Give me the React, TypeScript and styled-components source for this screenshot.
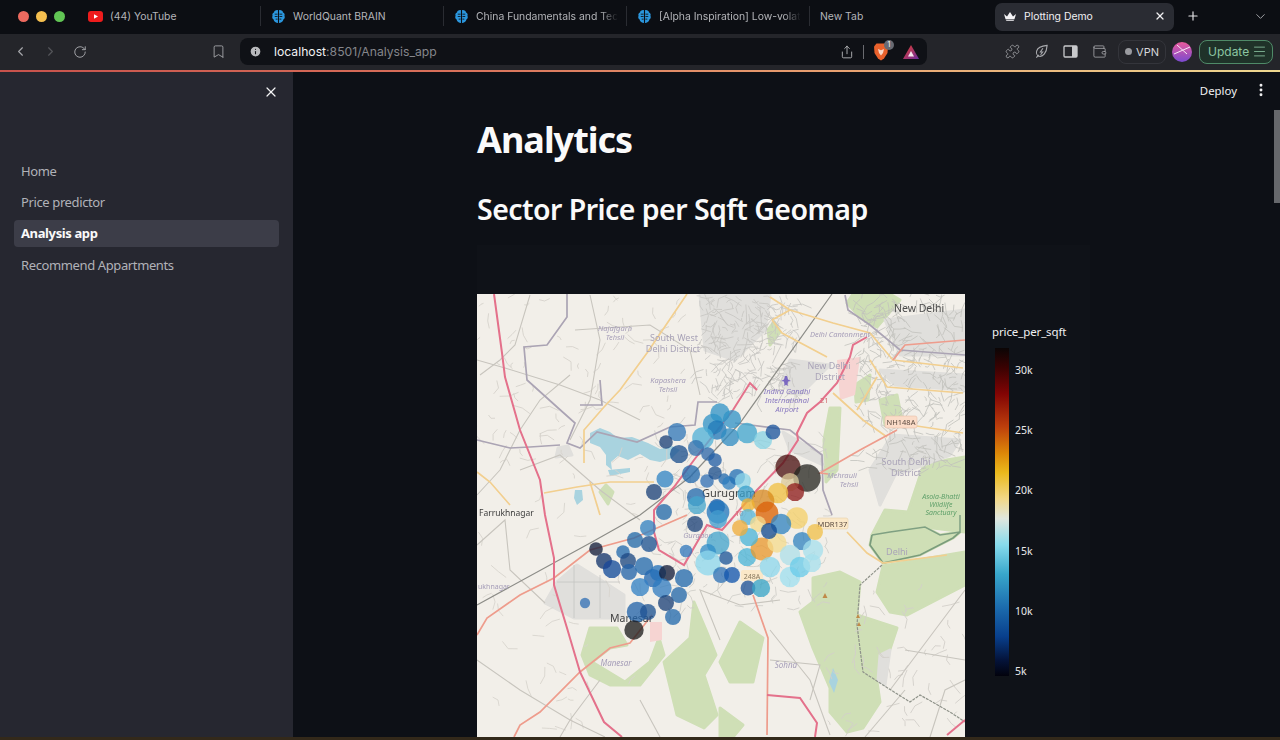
import React from 'react';
import styled, { createGlobalStyle } from 'styled-components';
import {
    ChevronLeft,
    ChevronRight,
    ChevronDown,
    RotateCw,
    Bookmark,
    Share,
    Puzzle,
    Wallet,
    Menu,
    X,
    Plus,
    EllipsisVertical,
    Info
} from 'lucide-react';

const GlobalStyle = createGlobalStyle`
    html, body {
        margin: 0;
        padding: 0;
        background: #0e1117;
        overflow: hidden;
    }
    * {
        box-sizing: border-box;
    }
`;

const UI_FONT = `"Inter", "Liberation Sans", sans-serif`;
const APP_FONT = `"Noto Sans", "Open Sans", sans-serif`;

const Page = styled.div`
    width: 1280px;
    height: 740px;
    display: flex;
    flex-direction: column;
    overflow: hidden;
    font-family: ${APP_FONT};
`;

const TabBar = styled.div`
    height: 34px;
    padding-bottom: 2px;
    display: flex;
    align-items: center;
    background: #0c0e13;
    font-family: ${UI_FONT};
`;

const TrafficLights = styled.div`
    width: 78px;
    padding-left: 18px;
    display: flex;
    gap: 7px;
`;

const Light = styled.span<{ $color: string }>`
    width: 11px;
    height: 11px;
    border-radius: 50%;
    background: ${p => p.$color};
`;

const Tab = styled.div<{ $last?: boolean }>`
    width: 183px;
    height: 20px;
    padding: 0 6px 0 10px;
    display: flex;
    align-items: center;
    gap: 7px;
    flex-shrink: 0;
    border-right: 1px solid ${p => (p.$last ? 'transparent' : '#2a2c32')};
`;

const TabLabel = styled.span<{ $fade?: boolean }>`
    font-size: 10.4px;
    color: #b4b5b9;
    white-space: nowrap;
    mask-image: ${p => (p.$fade ? 'linear-gradient(to right, #000 88%, transparent 100%)' : 'none')};
`;

const ActiveTab = styled.div`
    width: 179px;
    height: 28px;
    margin: 2px 0 0 2px;
    padding: 0 8px 0 9px;
    display: flex;
    align-items: center;
    gap: 8px;
    border-radius: 7px;
    background: #2a2c33;
    color: #f0f0f2;
    font-size: 10.4px;
`;

const ActiveLabel = styled.span`
    flex: 1;
    margin-top: -2px;
`;

const TabActions = styled.div`
    flex: 1;
    padding: 0 12px;
    display: flex;
    align-items: center;
    justify-content: space-between;
    color: #e6e6e8;
`;

const Toolbar = styled.div`
    height: 36px;
    padding: 0 0 1px 13px;
    display: flex;
    align-items: center;
    background: #24252a;
    color: #a8a9ad;
    font-family: ${UI_FONT};
`;

const NavIcons = styled.div`
    width: 198px;
    display: flex;
    align-items: center;
    gap: 15px;
`;

const BookmarkSlot = styled.div`
    width: 29px;
    display: flex;
`;

const UrlBar = styled.div`
    width: 687px;
    height: 27px;
    padding: 0 8px 0 9px;
    display: flex;
    align-items: center;
    border-radius: 8px;
    background: #0f1116;
`;

const Url = styled.span`
    flex: 1;
    margin-left: 12px;
    font-size: 12.2px;
    color: #85868b;
    strong {
        font-weight: 400;
        color: #f2f2f4;
    }
`;

const UrlDivider = styled.span`
    width: 1px;
    height: 14px;
    margin: 0 9px;
    background: #6a6b70;
`;

const BraveSlot = styled.span`
    position: relative;
    width: 16px;
    height: 18px;
    margin-right: 14px;
`;

const BraveBadge = styled.span`
    position: absolute;
    top: -3px;
    right: -5px;
    width: 10px;
    height: 10px;
    border-radius: 50%;
    background: #676a72;
    color: #fff;
    font-size: 7px;
    line-height: 10px;
    text-align: center;
`;

const ExtensionIcons = styled.div`
    margin-left: 78px;
    display: flex;
    align-items: center;
    gap: 14px;
`;

const VpnPill = styled.div`
    width: 48px;
    height: 24px;
    margin-left: -3px;
    display: flex;
    align-items: center;
    justify-content: center;
    gap: 4px;
    border-radius: 8px;
    border: 1px solid #34353b;
    font-size: 11px;
    color: #d6d7da;
`;

const VpnDot = styled.span`
    width: 7px;
    height: 7px;
    border-radius: 50%;
    background: #9a9ba0;
`;

const Avatar = styled.svg`
    margin: 0 7px 0 6px;
    flex-shrink: 0;
`;

const UpdateButton = styled.div`
    width: 74px;
    height: 24px;
    padding: 0 5px 0 8px;
    display: flex;
    align-items: center;
    justify-content: space-between;
    border-radius: 8px;
    border: 1px solid #4f8a68;
    background: #1f3229;
    color: #8cc5a2;
    font-size: 12px;
`;

const AccentLine = styled.div`
    height: 2px;
    background: linear-gradient(to right, #c8524c 0%, #d8705a 35%, #e8a070 65%, #eed890 100%);
`;

const Body = styled.div`
    flex: 1;
    display: flex;
    min-height: 0;
`;

const Sidebar = styled.nav`
    width: 293px;
    padding: 85px 14px 0;
    position: relative;
    background: #262730;
    flex-shrink: 0;
`;

const CloseButton = styled.span`
    position: absolute;
    top: 12px;
    right: 14px;
    color: #f4f4f6;
    display: flex;
`;

const NavItem = styled.div<{ $active?: boolean }>`
    height: 27px;
    margin-bottom: 4.4px;
    padding-left: 7px;
    display: flex;
    align-items: center;
    border-radius: 4px;
    font-size: 13px;
    letter-spacing: -0.38px;
    font-weight: ${p => (p.$active ? 700 : 400)};
    color: ${p => (p.$active ? '#fafafa' : '#b1b2b8')};
    background: ${p => (p.$active ? '#3c3d48' : 'transparent')};
`;

const Main = styled.main`
    flex: 1;
    position: relative;
    padding: 42px 0 0 184px;
    background: #0d1016;
    color: #fafafa;
    overflow: hidden;
`;

const AppHeader = styled.div`
    position: absolute;
    top: 10px;
    right: 11px;
    display: flex;
    align-items: center;
    gap: 16px;
    font-size: 11.4px;
    color: #f0f0f2;
`;

const ScrollThumb = styled.div`
    position: absolute;
    top: 38px;
    right: 0;
    width: 6px;
    height: 93px;
    background: #66686c;
`;

const Title = styled.h1`
    margin: 0;
    font-size: 36px;
    line-height: 52px;
    font-weight: 700;
    letter-spacing: -1px;
`;

const Subtitle = styled.h2`
    margin: 21px 0 14px;
    font-size: 28.5px;
    line-height: 44px;
    font-weight: 600;
    letter-spacing: -0.55px;
`;

const Plot = styled.div`
    width: 613px;
    height: 500px;
    padding-top: 49px;
    display: flex;
    background: #0f1218;
`;

const MapSvg = styled.svg`
    display: block;
    flex-shrink: 0;
`;

const Legend = styled.div`
    margin: 30px 0 0 27px;
`;

const LegendTitle = styled.div`
    font-size: 11.5px;
    line-height: 16px;
    letter-spacing: -0.12px;
    color: #f0f0f2;
`;

const LegendBody = styled.div`
    margin: 8px 0 0 3px;
    display: flex;
    gap: 6px;
`;

const ColorBar = styled.div`
    width: 14px;
    height: 328px;
    background: linear-gradient(
        to bottom,
        #0a0505 0%,
        #3a0202 6%,
        #820404 14%,
        #bd3f0c 24%,
        #dc8708 32%,
        #eab91c 38%,
        #f2d888 46%,
        #dfe6de 52%,
        #87dbec 60%,
        #38a6cb 69%,
        #1c6cae 79%,
        #083f8c 88%,
        #04143c 95%,
        #02020c 100%
    );
`;

const Ticks = styled.div`
    padding-top: 14px;
`;

const Tick = styled.div`
    height: 60.2px;
    font-size: 10.5px;
    line-height: 16px;
    color: #e8e8ea;
`;

const WallpaperStrip = styled.div`
    height: 3px;
    background: #33291a;
`;

type Pt = [number, number];

const pts = (list: Pt[]) => list.map(p => p.join(',')).join(' ');

// little seeded generator for the fine street texture of the towns
function streets(seed: number, x0: number, y0: number, x1: number, y1: number, n: number): string {
    let s = seed;
    const rnd = () => {
        s = (s * 16807) % 2147483647;
        return s / 2147483647;
    };
    let d = '';
    for (let i = 0; i < n; i++) {
        const x = x0 + rnd() * (x1 - x0);
        const y = y0 + rnd() * (y1 - y0);
        const a = rnd() * Math.PI * 2;
        const l = 2 + rnd() * 8;
        const mx = x + Math.cos(a) * l;
        const my = y + Math.sin(a) * l;
        const b = a + (rnd() - 0.5) * 2;
        d += `M${x.toFixed(1)} ${y.toFixed(1)}L${mx.toFixed(1)} ${my.toFixed(1)}L${(mx + Math.cos(b) * l).toFixed(1)} ${(my + Math.sin(b) * l).toFixed(1)}`;
    }
    return d;
}

const greens: Pt[][] = [
    [[847, 303], [860, 317], [877, 327], [900, 300], [890, 294], [853, 294]],
    [[923, 467], [947, 460], [965, 457], [965, 532], [925, 527], [890, 532], [872, 535], [885, 510], [908, 512]],
    [[872, 535], [890, 532], [925, 527], [940, 535], [960, 532], [953, 538], [920, 555], [883, 563], [870, 545]],
    [[883, 566], [965, 552], [965, 585], [907, 615], [890, 612], [877, 592]],
    [[813, 578], [840, 572], [860, 582], [857, 615], [897, 628], [887, 658], [877, 682], [880, 702], [863, 728], [847, 732], [830, 712], [830, 688], [813, 648], [800, 612], [813, 602]],
    [[590, 628], [617, 628], [627, 645], [610, 648], [592, 662], [625, 682], [650, 662], [659, 638], [664, 655], [640, 685], [610, 685], [590, 675], [582, 655]],
    [[694, 602], [690, 638], [664, 662], [677, 715], [704, 728], [717, 715], [704, 675], [716, 655], [706, 630]],
    [[740, 622], [763, 638], [753, 682], [730, 682], [720, 662]],
    [[720, 708], [743, 725], [733, 737], [720, 737]],
    [[830, 408], [840, 408], [837, 470], [826, 482], [824, 440]],
    [[855, 385], [870, 375], [868, 400], [856, 402]],
    [[880, 400], [897, 395], [902, 420], [885, 425]],
    [[600, 492], [606, 485], [613, 492], [608, 504]],
    [[768, 330], [774, 322], [780, 332], [770, 345]]
];

const greys: Pt[][] = [
    [[577, 565], [557, 582], [545, 603], [574, 618], [624, 618], [624, 595], [604, 582]],
    [[700, 295], [770, 295], [765, 330], [735, 360], [705, 350]],
    [[790, 360], [830, 365], [800, 395], [780, 385]],
    [[885, 320], [965, 310], [965, 355], [900, 355]],
    [[880, 370], [965, 375], [965, 390], [895, 385]],
    [[892, 435], [960, 440], [950, 455], [910, 470], [895, 475], [880, 505], [870, 470]],
    [[783, 432], [822, 455], [823, 465], [790, 450]],
    [[558, 448], [568, 446], [572, 455], [556, 457]],
    [[880, 655], [890, 650], [885, 685], [878, 680]]
];

const pinkZones: Pt[][] = [
    [[837, 360], [860, 357], [855, 395], [840, 400]],
    [[650, 622], [662, 622], [662, 640], [650, 642]]
];

const water: Pt[][] = [
    [[590, 433], [600, 428], [610, 432], [618, 438], [632, 437], [648, 443], [660, 449], [672, 446], [680, 450], [672, 458], [660, 462], [650, 460], [640, 454], [628, 460], [618, 456], [611, 462], [612, 470], [606, 465], [606, 455], [600, 447], [590, 443]],
    [[608, 470], [630, 468], [630, 472], [610, 476]],
    [[575, 490], [582, 490], [583, 500], [577, 505], [574, 498]],
    [[833, 668], [838, 680], [834, 693], [829, 682]]
];

const pinkRoads: Pt[][] = [
    [[494, 294], [502, 353], [505, 377], [520, 430], [540, 480], [545, 515], [554, 558], [554, 585], [567, 628], [580, 672], [604, 722], [622, 737]],
    [[867, 337], [853, 345], [850, 357], [837, 383], [820, 402], [807, 413], [797, 433], [798, 440], [783, 463], [757, 490], [722, 530], [707, 525], [684, 565], [659, 550], [654, 532], [654, 510], [674, 487], [694, 460], [733, 410], [750, 383], [757, 390]],
    [[767, 695], [800, 698], [817, 723], [815, 737]],
    [[947, 735], [965, 720]]
];

const salmonRoads: Pt[][] = [
    [[477, 635], [487, 618], [520, 595], [554, 578], [590, 550], [634, 538], [687, 515]],
    [[514, 737], [520, 725], [540, 712], [580, 672], [610, 648], [630, 643], [652, 615]],
    [[828, 474], [820, 473], [860, 450], [897, 430]],
    [[753, 595], [768, 638], [767, 735]],
    [[893, 360], [905, 345], [965, 340]]
];

const yellowRoads: Pt[][] = [
    [[687, 294], [647, 353], [620, 390], [604, 407], [584, 430], [584, 463]],
    [[544, 493], [577, 487], [610, 482], [654, 482]],
    [[770, 297], [790, 310], [833, 323], [870, 333], [893, 360], [963, 368]],
    [[772, 320], [782, 333], [827, 357]],
    [[790, 310], [772, 320]],
    [[833, 393], [863, 420], [887, 437]],
    [[877, 377], [857, 410]],
    [[870, 360], [887, 387], [963, 393]],
    [[897, 423], [963, 433]],
    [[847, 532], [867, 553], [883, 563], [947, 555]],
    [[477, 472], [490, 482], [510, 505]],
    [[590, 482], [600, 515]]
];

const borders: Pt[][] = [
    [[567, 294], [567, 317], [547, 345], [524, 347], [527, 380], [557, 407], [575, 423], [567, 443], [580, 448], [597, 432], [637, 442], [670, 427], [695, 425], [698, 402], [717, 402]],
    [[735, 423], [790, 430], [822, 455], [823, 490], [832, 515]],
    [[477, 440], [510, 448], [530, 447], [560, 445]],
    [[600, 380], [602, 405], [580, 405]],
    [[845, 295], [848, 310], [870, 325], [900, 350], [965, 355]]
];

const stateBorder: Pt[] = [[882, 565], [860, 585], [857, 625], [863, 672], [883, 685], [910, 702], [920, 695], [950, 712], [965, 722]];

const railway: Pt[] = [[832, 294], [740, 423], [690, 477], [640, 515], [592, 542], [550, 565], [477, 605]];

const greyRoads: Pt[][] = [
    [[477, 360], [505, 368], [560, 385], [600, 400], [640, 420]],
    [[530, 295], [515, 345], [500, 360], [480, 375]],
    [[575, 330], [650, 325], [690, 350], [700, 395]],
    [[477, 495], [500, 470], [520, 430], [540, 400], [570, 375]],
    [[590, 295], [600, 340], [590, 400], [570, 440]],
    [[520, 470], [560, 455], [600, 490], [640, 520]],
    [[477, 660], [520, 690], [570, 720], [605, 737]],
    [[477, 545], [505, 520], [510, 570], [545, 603]],
    [[640, 700], [660, 737]],
    [[600, 680], [570, 720], [560, 737]],
    [[770, 630], [810, 680], [830, 735]],
    [[770, 660], [820, 665], [810, 700]],
    [[890, 690], [965, 590]],
    [[865, 737], [905, 690]],
    [[930, 737], [945, 690], [965, 680]],
    [[905, 650], [965, 660]],
    [[720, 640], [700, 590], [740, 605], [780, 600]]
];

const bubbles: [number, number, number, string][] = [
    [720, 413, 8.5, '#2f93c6'], [732, 419, 8, '#2f93c6'], [713, 424, 9, '#2f93c6'], [717, 430, 8.5, '#1f78b8'],
    [730, 437, 8, '#2f8cc2'], [747, 433, 9, '#3fa6cf'], [763, 440, 8, '#86d2e4'], [773, 432, 6.5, '#1c549c'],
    [677, 432, 8, '#2f78b8'], [666, 442, 6, '#173f78'], [703, 438, 9.5, '#4fb0d6'], [696, 448, 7, '#2f70ae'],
    [679, 454, 8, '#1c4d8e'], [708, 454, 6, '#2a66a8'], [715, 460, 6, '#1f5ca4'], [665, 479, 7.5, '#2f85c4'],
    [654, 492, 7, '#173f78'], [691, 474, 8, '#2368ac'], [707, 481, 6, '#2f70b4'], [715, 473, 6, '#1c4d8e'],
    [724, 479, 5, '#2368ac'], [729, 483, 6, '#2f80c0'], [737, 477, 7, '#2470b4'], [743, 481, 7, '#8cd6e8'],
    [746, 494, 7.5, '#379fcc'], [696, 497, 8, '#2368ac'], [697, 505, 8, '#45a5cd'], [717, 507, 7, '#1358a8'],
    [718, 512, 10, '#2376bc'], [718, 519, 8, '#459ecf'], [664, 512, 7, '#2368a8'], [695, 524, 7, '#173f78'],
    [648, 528, 7, '#2f80c0'], [788, 467, 11, '#4a1510'], [807, 478, 12, '#252523'], [790, 482, 8, '#dcc99a'],
    [795, 492, 8, '#8e1a1a'], [778, 493, 9, '#f0c040'], [763, 501, 10, '#d98a20'], [767, 513, 10, '#dc6008'],
    [748, 505, 6, '#f0b430'], [748, 517, 7, '#56b4d8'], [797, 518, 9.5, '#f5d068'], [781, 524, 9, '#2f84c0'],
    [758, 524, 7, '#f5dc8e'], [718, 543, 10, '#45a4cd'], [708, 552, 7, '#2f8cc8'], [708, 563, 11, '#8cd8ec'],
    [726, 558, 6, '#1c5498'], [686, 551, 5.5, '#2f78bc'], [684, 578, 8, '#2368ac'], [721, 575, 7, '#2a70b4'],
    [732, 575, 7, '#0f54ac'], [748, 588, 6.5, '#1c4f94'], [761, 588, 8, '#37a4c6'], [747, 557, 8, '#48b4d8'],
    [762, 549, 10, '#e8982a'], [777, 543, 8.5, '#f5dc8e'], [769, 531, 7, '#0f4890'], [749, 537, 8, '#48b4d8'],
    [740, 528, 7, '#efac38'], [802, 541, 8, '#2f84c0'], [815, 532, 7, '#f0c048'], [770, 567, 9, '#8cd8ec'],
    [790, 555, 9, '#aee0e8'], [813, 550, 9, '#a6e0ec'], [790, 577, 9, '#9ee0ef'], [800, 567, 9, '#68cae8'],
    [812, 563, 8, '#a6e0ec'], [635, 540, 7, '#2368a8'], [649, 544, 7, '#1c5090'], [596, 549, 6, '#101c38'],
    [604, 561, 7, '#10306a'], [612, 569, 8, '#15489a'], [623, 552, 6, '#2368ac'], [628, 561, 7, '#1c4682'],
    [629, 572, 7, '#2262a8'], [644, 566, 8, '#2368ac'], [653, 578, 8, '#2266b0'], [658, 573, 7, '#2470b8'],
    [667, 573, 7, '#101c38'], [662, 588, 8.5, '#2f7cc0'], [640, 587, 8, '#3280c4'], [679, 595, 7, '#2266a8'],
    [666, 603, 7, '#173f78'], [673, 617, 7, '#2368ac'], [637, 612, 9, '#2262a8'], [648, 612, 7, '#1c5090'],
    [585, 603, 4.5, '#2f70b4'], [634, 630, 8.5, '#1a1a1a']
];

function BrainIcon() {
    return (
        <svg width="15" height="15" viewBox="0 0 16 16">
            <path d="M7.4 1.2C5 .9 3.5 2 3.2 3.6 1.6 4.200 1 6 1.700 7.200 .9 8.700 1.300 10.500 2.800 11.300 3 13.300 5 15.100 7.400 14.800Z" fill="#2b96dd" />
            <path d="M8.600 1.200C11 .9 12.500 2 12.800 3.600 14.400 4.200 15 6 14.300 7.200 15.100 8.700 14.700 10.500 13.200 11.300 13 13.300 11 15.100 8.600 14.800Z" fill="#2b96dd" />
            <path d="M4 5.500h3M4 8h3M5 10.800h2M9 5.500h3M9 8h3M9 10.800h2" stroke="#0c0e13" strokeWidth="0.9" />
        </svg>
    );
}

function YouTubeIcon() {
    return (
        <svg width="15" height="11" viewBox="0 0 15 11">
            <rect width="15" height="11" rx="3" fill="#ee1c1c" />
            <path d="M6 3.200L10 5.500 6 7.800Z" fill="#fff" />
        </svg>
    );
}

function StreamlitIcon() {
    return (
        <svg width="12" height="9" viewBox="0 0 12 9" style={{ marginTop: -2 }}>
            <path d="M0 2L3 4.500 6 0 9 4.500 12 2 10.500 7H1.500Z" fill="#f4f4f6" />
            <path d="M1.500 7.500H10.500L9.500 9H2.500Z" fill="#c8c8cc" />
        </svg>
    );
}

function BraveIcon() {
    return (
        <svg width="16" height="18" viewBox="0 0 16 18">
            <path d="M3.500 0.500H12.500L15 3.500 14.500 10 11 15.500 8 17.500 5 15.500 1.500 10 1 3.500Z" fill="#e8612c" />
            <path d="M5 6L8 7.200 11 6 10 10 8 12.500 6 10Z" fill="#f8d8c8" />
        </svg>
    );
}

function TriangleIcon() {
    return (
        <svg width="16" height="14" viewBox="0 0 16 14">
            <defs>
                <linearGradient id="bat" x1="0" y1="0" x2="1" y2="1">
                    <stop offset="0" stopColor="#e8402c" />
                    <stop offset="1" stopColor="#6a2ca0" />
                </linearGradient>
            </defs>
            <path d="M8 0L16 14H0Z" fill="url(#bat)" />
            <path d="M8 6L11 11.500H5Z" fill="#f6e8f0" />
        </svg>
    );
}

function LeafIcon() {
    return (
        <svg width="15" height="15" viewBox="0 0 16 16" fill="none" stroke="currentColor" strokeWidth="1.200">
            <path d="M2.500 14.500L5 11.500M14 1.500C9 2 4 3 2.800 7.500 2.200 10 3.500 12.500 5.500 13 9.500 14 13.500 9.500 14 1.500Z" />
            <path d="M9.500 4.500L6.800 8.500H9.200L7 11.500" />
        </svg>
    );
}

function SidePanelIcon() {
    return (
        <svg width="15" height="15" viewBox="0 0 15 15">
            <rect x="1" y="2" width="13" height="11" rx="1" fill="none" stroke="#c8c9cc" strokeWidth="1.300" />
            <rect x="9" y="2" width="5" height="11" fill="#c8c9cc" />
        </svg>
    );
}

function MapDrawing() {
    return (
        <MapSvg width="488" height="443" viewBox="477 294 488 443" fontFamily={APP_FONT}>
            <defs>
                <filter id="soft" x="-5%" y="-5%" width="110%" height="110%">
                    <feGaussianBlur stdDeviation="0.7" />
                </filter>
                <filter id="softer" x="-5%" y="-5%" width="110%" height="110%">
                    <feGaussianBlur stdDeviation="0.35" />
                </filter>
                <clipPath id="mapEdge">
                    <rect x="477" y="294" width="488" height="443" />
                </clipPath>
            </defs>
            <rect x="477" y="294" width="488" height="443" fill="#f2efe9" />
            <g clipPath="url(#mapEdge)">
                <g filter="url(#soft)">
                    {greens.map((g, i) => <polygon key={i} points={pts(g)} fill="#cfdfb6" stroke="#cfdfb6" strokeWidth="3" strokeLinejoin="round" />)}
                    {greys.map((g, i) => <polygon key={i} points={pts(g)} fill="#e0dfdc" stroke="#e0dfdc" strokeWidth="3" strokeLinejoin="round" />)}
                    {pinkZones.map((g, i) => <polygon key={i} points={pts(g)} fill="#f6d4d2" />)}
                    {water.map((g, i) => <polygon key={i} points={pts(g)} fill="#a9d3df" />)}
                    <path d={streets(11, 700, 295, 800, 400, 240)} fill="none" stroke="#c6c5c1" strokeWidth="0.8" />
                    <path d={streets(23, 860, 295, 965, 470, 320)} fill="none" stroke="#c2c1bd" strokeWidth="0.8" />
                    <path d={streets(37, 660, 440, 830, 610, 170)} fill="none" stroke="#cdcbc6" strokeWidth="0.8" />
                    <path d={streets(51, 477, 295, 690, 480, 90)} fill="none" stroke="#d6d3cc" strokeWidth="0.9" />
                    <path d={streets(67, 477, 500, 640, 737, 40)} fill="none" stroke="#d8d5ce" strokeWidth="0.9" />
                    <path d={streets(83, 830, 590, 965, 737, 50)} fill="none" stroke="#d2cfc9" strokeWidth="0.9" />
                    <path d="M557 582L620 582M574 565L574 618M600 575L600 618" fill="none" stroke="#c4c4c2" strokeWidth="0.8" />
                    {greyRoads.map((r, i) => <polyline key={i} points={pts(r)} fill="none" stroke="#c8c5be" strokeWidth="1.100" />)}
                    {borders.map((r, i) => <polyline key={i} points={pts(r)} fill="none" stroke="#aba4b4" strokeWidth="1.700" />)}
                    <polyline points={pts(stateBorder)} fill="none" stroke="#8f938a" strokeWidth="1.200" strokeDasharray="3 1" />
                    <polyline points="872,535 890,532 925,527 940,535 960,532 960,515" fill="none" stroke="#7fa082" strokeWidth="1.500" />
                    <polyline points="872,535 870,545 883,563 920,555 953,538 960,532" fill="none" stroke="#7a9c7c" strokeWidth="1.700" />
                    <polyline points={pts(railway)} fill="none" stroke="#8d8d88" strokeWidth="1.200" />
                    {yellowRoads.map((r, i) => <polyline key={i} points={pts(r)} fill="none" stroke="#f2cf8f" strokeWidth="1.700" />)}
                    {salmonRoads.map((r, i) => <polyline key={i} points={pts(r)} fill="none" stroke="#ee9c8c" strokeWidth="1.700" />)}
                    {pinkRoads.map((r, i) => <polyline key={i} points={pts(r)} fill="none" stroke="#e4718b" strokeWidth="2" />)}
                    <path d="M787 376l1 3.500 3 1.500-3 .5-.5 3 1 1-1.500 0-1-.8-1 .8-1.500 0 1-1-.5-3-3-.5 3-1.500 1-3.500z" fill="#7a68c0" />
                    <path d="M825 593l2.500 5h-5zM858 614l2 4h-4zM859 622l2 4h-4z" fill="#c08a4a" />
                </g>
                <g filter="url(#softer)">
                    <g fill="#a59db8" fontSize="7.500" fontStyle="italic" textAnchor="middle">
                        <text x="615" y="331">Najafgarh</text>
                        <text x="615" y="340">Tehsil</text>
                        <text x="668" y="383">Kapashera</text>
                        <text x="668" y="392">Tehsil</text>
                        <text x="840" y="337">Delhi Cantonment</text>
                        <text x="842" y="478">Mehrauli</text>
                        <text x="849" y="487">Tehsil</text>
                        <text x="616" y="666" fontSize="8">Manesar</text>
                        <text x="698" y="538">Gurgaon</text>
                        <text x="786" y="668" fontSize="8">Sohna</text>
                    </g>
                    <g fill="#8878c0" fontSize="7.500" fontStyle="italic" textAnchor="middle">
                        <text x="787" y="394">Indira Gandhi</text>
                        <text x="787" y="403">International</text>
                        <text x="787" y="412">Airport</text>
                    </g>
                    <g fill="#aaa4b8" fontSize="9" textAnchor="middle">
                        <text x="674" y="341">South West</text>
                        <text x="673" y="352">Delhi District</text>
                        <text x="829" y="369">New Delhi</text>
                        <text x="830" y="380">District</text>
                        <text x="906" y="465">South Delhi</text>
                        <text x="906" y="476">District</text>
                        <text x="897" y="555">Delhi</text>
                    </g>
                    <g fill="#5fa06a" fontSize="7" fontStyle="italic" textAnchor="middle">
                        <text x="941" y="499">Asola-Bhatti</text>
                        <text x="941" y="507">Wildlife</text>
                        <text x="941" y="515">Sanctuary</text>
                    </g>
                    <text x="894" y="312" fontSize="10.500" fill="#4d4d4d">New Delhi</text>
                    <text x="479" y="516" fontSize="8.500" fill="#3c3c3c">Farrukhnagar</text>
                    <text x="478" y="589" fontSize="7" fill="#a59db8">ukhnagar</text>
                    <text x="702" y="497" fontSize="11" fill="#444">Gurugram</text>
                    <text x="610" y="622" fontSize="10.500" fill="#444">Manesar</text>
                    <rect x="885" y="416" width="32" height="12" rx="2" fill="#fbdcc8" stroke="#e8c0a8" strokeWidth="0.6" />
                    <text x="901" y="425" fontSize="7.500" fill="#5a4a40" textAnchor="middle">NH148A</text>
                    <rect x="817" y="518" width="31" height="11" rx="2" fill="#fbe8c8" stroke="#e8d0a8" strokeWidth="0.6" />
                    <text x="832.500" y="526.500" fontSize="7.500" fill="#5a4a40" textAnchor="middle">MDR137</text>
                    <rect x="741" y="570" width="22" height="11" rx="2" fill="#fbe8c8" />
                    <text x="752" y="578.500" fontSize="7" fill="#8a7a60" textAnchor="middle">248A</text>
                    <text x="735" y="516" fontSize="7.500" fill="#d06a70">10</text>
                    <text x="820" y="403" fontSize="7.500" fill="#d06a70">21</text>
                </g>
                <g filter="url(#softer)">
                    {bubbles.map(([cx, cy, r, fill], i) => (
                        <circle key={i} cx={cx} cy={cy} r={r * 1.14} fill={fill} fillOpacity="0.76" />
                    ))}
                </g>
            </g>
        </MapSvg>
    );
}

const navItems = ['Home', 'Price predictor', 'Analysis app', 'Recommend Appartments'];
const tickLabels = ['30k', '25k', '20k', '15k', '10k', '5k'];

export default function App() {
    return (
        <Page>
            <GlobalStyle />
            <TabBar>
                <TrafficLights>
                    <Light $color="#ed6a5f" />
                    <Light $color="#f5bf4f" />
                    <Light $color="#61c554" />
                </TrafficLights>
                <Tab>
                    <YouTubeIcon />
                    <TabLabel>(44) YouTube</TabLabel>
                </Tab>
                <Tab>
                    <BrainIcon />
                    <TabLabel>WorldQuant BRAIN</TabLabel>
                </Tab>
                <Tab>
                    <BrainIcon />
                    <TabLabel $fade>China Fundamentals and Tec</TabLabel>
                </Tab>
                <Tab>
                    <BrainIcon />
                    <TabLabel $fade>[Alpha Inspiration] Low-volat</TabLabel>
                </Tab>
                <Tab $last>
                    <TabLabel>New Tab</TabLabel>
                </Tab>
                <ActiveTab>
                    <StreamlitIcon />
                    <ActiveLabel>Plotting Demo</ActiveLabel>
                    <X size={12} strokeWidth={2.5} style={{ marginTop: -2 }} />
                </ActiveTab>
                <TabActions>
                    <Plus size={14} strokeWidth={2} />
                    <ChevronDown size={15} strokeWidth={1.5} color="#a8a9ad" />
                </TabActions>
            </TabBar>
            <Toolbar>
                <NavIcons>
                    <ChevronLeft size={15} strokeWidth={1.8} />
                    <ChevronRight size={15} strokeWidth={1.8} color="#55565b" />
                    <RotateCw size={14} strokeWidth={1.6} />
                </NavIcons>
                <BookmarkSlot>
                    <Bookmark size={15} strokeWidth={1.4} />
                </BookmarkSlot>
                <UrlBar>
                    <Info size={13} fill="#b8b9bc" color="#0f1116" />
                    <Url><strong>localhost</strong>:8501/Analysis_app</Url>
                    <Share size={14} strokeWidth={1.4} color="#c8c9cc" />
                    <UrlDivider />
                    <BraveSlot>
                        <BraveIcon />
                        <BraveBadge>1</BraveBadge>
                    </BraveSlot>
                    <TriangleIcon />
                </UrlBar>
                <ExtensionIcons>
                    <Puzzle size={15} strokeWidth={1.3} />
                    <LeafIcon />
                    <SidePanelIcon />
                    <Wallet size={15} strokeWidth={1.3} />
                    <VpnPill><VpnDot />VPN</VpnPill>
                </ExtensionIcons>
                <Avatar width="20" height="20" viewBox="0 0 20 20">
                    <defs>
                        <linearGradient id="ava" x1="0" y1="0" x2="0" y2="1">
                            <stop offset="0" stopColor="#e85a9c" />
                            <stop offset="1" stopColor="#7a4ad0" />
                        </linearGradient>
                    </defs>
                    <circle cx="10" cy="10" r="10" fill="url(#ava)" />
                    <path d="M2 12L18 5M5 3L15 12" stroke="#f6e8f4" strokeWidth="1" fill="none" />
                </Avatar>
                <UpdateButton>
                    Update
                    <Menu size={15} strokeWidth={1.3} />
                </UpdateButton>
            </Toolbar>
            <AccentLine />
            <Body>
                <Sidebar>
                    <CloseButton><X size={16} strokeWidth={1.8} /></CloseButton>
                    {navItems.map(item => (
                        <NavItem key={item} $active={item === 'Analysis app'}>{item}</NavItem>
                    ))}
                </Sidebar>
                <Main>
                    <AppHeader>
                        Deploy
                        <EllipsisVertical size={16} strokeWidth={2.4} />
                    </AppHeader>
                    <ScrollThumb />
                    <Title>Analytics</Title>
                    <Subtitle>Sector Price per Sqft Geomap</Subtitle>
                    <Plot>
                        <MapDrawing />
                        <Legend>
                            <LegendTitle>price_per_sqft</LegendTitle>
                            <LegendBody>
                                <ColorBar />
                                <Ticks>
                                    {tickLabels.map(t => <Tick key={t}>{t}</Tick>)}
                                </Ticks>
                            </LegendBody>
                        </Legend>
                    </Plot>
                </Main>
            </Body>
            <WallpaperStrip />
        </Page>
    );
}
